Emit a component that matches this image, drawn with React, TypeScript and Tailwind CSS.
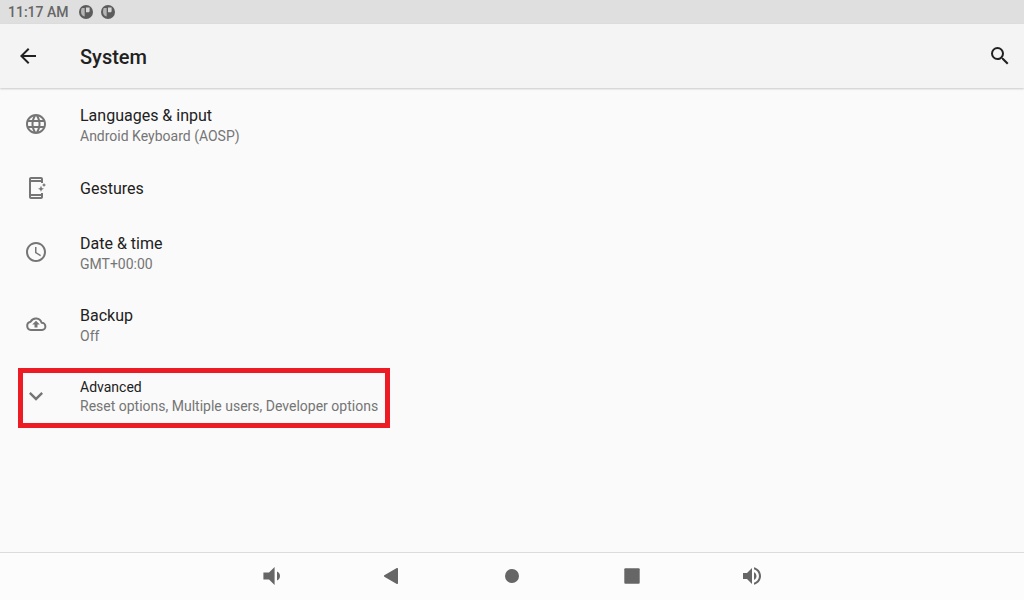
import type { ReactNode } from "react";
import {
  MdArrowBack,
  MdExpandMore,
  MdLanguage,
  MdSchedule,
  MdSearch,
  MdVolumeUp,
} from "react-icons/md";

type Item = { title: string; summary?: string; icon: ReactNode };

const ITEMS: Item[] = [
  {
    title: "Languages & input",
    summary: "Android Keyboard (AOSP)",
    icon: <MdLanguage size={24} />,
  },
  { title: "Gestures", icon: <GestureIcon /> },
  { title: "Date & time", summary: "GMT+00:00", icon: <MdSchedule size={24} /> },
  { title: "Backup", summary: "Off", icon: <BackupIcon /> },
];

export default function App() {
  return (
    <div className="flex min-h-screen flex-col bg-[#fafafa] font-[Roboto,sans-serif] text-[#212121]">
      <StatusBar />
      <header className="z-10 flex h-16 items-center bg-[#f4f4f4] pr-3 shadow-[0_1px_2px_rgba(0,0,0,0.2)]">
        <button type="button" aria-label="Back" className="flex w-14 justify-center">
          <MdArrowBack size={24} />
        </button>
        <h1 className="flex-1 pt-0.5 pl-6 text-xl font-medium">System</h1>
        <button type="button" aria-label="Search">
          <MdSearch size={24} />
        </button>
      </header>

      <main className="flex-1">
        <ul>
          {ITEMS.map((item) => (
            <li key={item.title}>
              <SettingRow item={item} />
            </li>
          ))}
          <li className="relative w-fit">
            <button type="button" className="flex h-18 items-center pr-3 text-left text-sm">
              <span className="flex w-18 justify-center text-[#757575]">
                <MdExpandMore size={28} />
              </span>
              <span className="flex flex-col pl-2">
                <span className="leading-5">Advanced</span>
                <span className="leading-[18px] text-[#757575]">
                  Reset options, Multiple users, Developer options
                </span>
              </span>
            </button>
            <div className="pointer-events-none absolute top-2 right-0 bottom-1 left-[18px] border-5 border-[#ed1c24]" />
          </li>
        </ul>
      </main>

      <NavBar />
    </div>
  );
}

function StatusBar() {
  return (
    <div className="flex h-6 items-center bg-[#dfdfdf] pl-2 text-[#666666]">
      <span className="text-sm font-medium">11:17 AM</span>
      <span className="flex gap-2 pl-2.5">
        <NotificationIcon />
        <NotificationIcon />
      </span>
    </div>
  );
}

function SettingRow({ item }: { item: Item }) {
  return (
    <button
      type="button"
      className={`flex w-full items-center text-left ${item.summary ? "h-18" : "h-14"}`}
    >
      <span className="flex w-18 justify-center text-[#757575]">{item.icon}</span>
      <span className="flex flex-col pt-0.5 pl-2">
        <span className="text-base leading-[22px]">{item.title}</span>
        {item.summary && (
          <span className="text-sm leading-[18px] text-[#757575]">{item.summary}</span>
        )}
      </span>
    </button>
  );
}

function NavBar() {
  return (
    <nav className="flex h-12 items-center justify-center gap-24 border-t border-[#dcdcdc] bg-[#fcfcfc] pb-0.5 text-[#666666]">
      <button type="button" aria-label="Volume down">
        <svg width="24" height="24" viewBox="0 0 24 24" fill="currentColor">
          <path d="M3.4 8.4H9L14.6 3v18L9 15.6H3.4zM17 7.6c1.9.8 3 2.4 3 4.4s-1.1 3.6-3 4.4z" />
        </svg>
      </button>
      <button type="button" aria-label="Back">
        <svg width="24" height="24" viewBox="0 0 24 24" fill="currentColor">
          <path d="M18 4.7v14.6c0 .7-.6 1-1.2.6L4.3 12.7c-.5-.3-.5-1.1 0-1.4L16.800 4.100c.6-.4 1.200-.1 1.200.6z" />
        </svg>
      </button>
      <button type="button" aria-label="Home">
        <svg width="24" height="24" viewBox="0 0 24 24" fill="currentColor">
          <circle cx="12" cy="12" r="7" />
        </svg>
      </button>
      <button type="button" aria-label="Recent apps">
        <svg width="24" height="24" viewBox="0 0 24 24" fill="currentColor">
          <rect x="4.3" y="4.3" width="15.4" height="15.4" rx="1" />
        </svg>
      </button>
      <button type="button" aria-label="Volume up">
        <MdVolumeUp size={24} />
      </button>
    </nav>
  );
}

function NotificationIcon() {
  return (
    <svg width="14" height="14" viewBox="0 0 14 14">
      <circle cx="7" cy="7" r="7" fill="#5c5c5c" />
      <path d="M2.800 3h2.900v8.500C3.400 11 2 9.200 2 7c0-1.500.3-3 .8-4z" fill="#b4b4b4" />
      <path d="M7 2.600h3.600v3.400c0 .8-.6 1.300-1.400 1.300H7z" fill="#d6d6d6" />
    </svg>
  );
}

function GestureIcon() {
  return (
    <svg width="24" height="24" viewBox="0 0 24 24" fill="currentColor">
      <path
        fillRule="evenodd"
        d="M7 1h10c1.1 0 2 .9 2 2v4h-2V6H7v12h10v-1h2v4c0 1.100-.9 2-2 2H7c-1.100 0-2-.9-2-2V3c0-1.100.9-2 2-2zm0 2v1h10V3zm0 17v1h10v-1z"
      />
      <path d="M17 9.800l.9 2.100 2.100.9-2.100.9-.9 2.100-.9-2.100-2.100-.9 2.100-.9z" />
      <path d="M20 7l.7 1.300 1.300.7-1.300.7-.7 1.300-.7-1.300-1.300-.7 1.300-.7z" />
    </svg>
  );
}

function BackupIcon() {
  return (
    <svg width="24" height="24" viewBox="0 0 24 24" fill="none">
      <path
        d="M7 18a4.200 4.200 0 0 1-.4-8.300A6 6 0 0 1 17.600 10.800 3.600 3.600 0 0 1 18 18z"
        stroke="currentColor"
        strokeWidth="2"
        strokeLinejoin="round"
      />
      <path d="M12 8.800l3.800 3.800h-2.300V15.500h-3v-2.900H8.200z" fill="currentColor" />
    </svg>
  );
}
